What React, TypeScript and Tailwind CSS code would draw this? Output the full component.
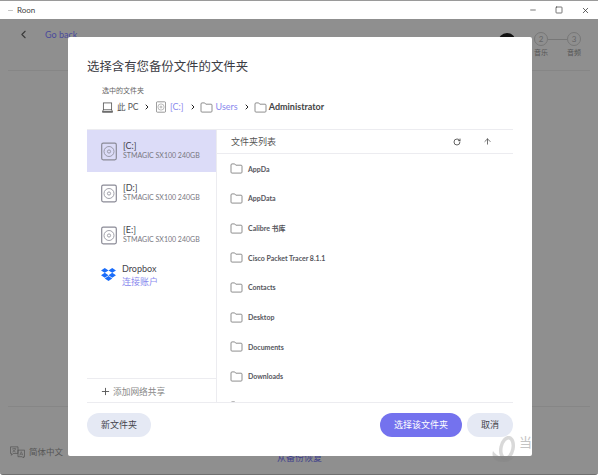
import { ChevronLeft, ChevronRight, Plus, RotateCw, ArrowUp, Minus, Square, X } from "lucide-react";

const FONT = "font-['Lato','Noto_Sans_CJK_SC',sans-serif]";

function Folder({ className = "" }: { className?: string }) {
  return (
    <svg viewBox="0 0 14 12" className={className} fill="none" stroke="currentColor" strokeWidth="0.9">
      <path d="M1 2.2C1 1.5 1.4 1 2 1h3l1.2 1.4H12c.6 0 1 .4 1 1V10c0 .6-.4 1-1 1H2c-.6 0-1-.4-1-1z" />
    </svg>
  );
}

function Drive({ className = "" }: { className?: string }) {
  return (
    <svg viewBox="0 0 16 18" className={className} fill="none" stroke="currentColor">
      <rect x="0.7" y="0.7" width="14.6" height="16.6" rx="1.5" strokeWidth="1.2" />
      <circle cx="8" cy="9" r="5" strokeWidth="0.8" />
      <circle cx="8" cy="9" r="1.6" strokeWidth="0.8" />
    </svg>
  );
}

function DriveRow({ name, selected }: { name: string; selected?: boolean }) {
  return (
    <div className={`h-[42px] flex items-center pl-[14px] gap-[6px] ${selected ? "bg-[#dcdcf8]" : ""}`}>
      <Drive className="w-[16px] h-[19px] text-[#8a8a96]" />
      <div className="flex flex-col mb-[2px]">
        <span className="text-[9px] leading-[10px] text-[#44444c]">{name}</span>
        <span className="text-[7px] leading-[8px] text-[#77777f]">STMAGIC SX100 240GB</span>
      </div>
    </div>
  );
}

const folders = ["AppDa", "AppData", "Calibre 书库", "Cisco Packet Tracer 8.1.1", "Contacts", "Desktop", "Documents", "Downloads", ""];

export default function App() {
  return (
    <div className={`${FONT} relative w-[600px] h-[475px] overflow-hidden bg-white`}>
      {/* window behind the dialog */}
      <div className="w-[598px] h-[475px] flex flex-col bg-[#8f8f8f] rounded-b-[3px] border-t border-b border-t-[#9a9a9a] border-b-[#6f6f6f]">
        <div className="h-[18px] shrink-0 bg-white flex items-center pl-[7px] pr-[8px]">
          <Minus className="w-[7px] h-[7px] text-[#999]" />
          <span className="ml-[3px] text-[8px] text-[#444]">Roon</span>
          <div className="ml-auto flex items-center gap-[18px]">
            <Minus className="w-[8px] h-[8px] text-[#333]" />
            <Square className="w-[8px] h-[8px] text-[#333]" />
            <X className="w-[9px] h-[9px] text-[#333]" />
          </div>
        </div>
        <div className="h-[52px] shrink-0 mx-[8px] border-b border-[#868686] relative flex items-start pt-[9px]">
          <ChevronLeft className="ml-[9px] w-[13px] h-[13px] text-[#3a3a3a]" />
          <span className="ml-[15px] text-[9px] leading-[13px] text-[#4a4a9c]">Go back</span>
          <div className="absolute left-[490px] top-[14px] w-[18px] h-[18px] rounded-full bg-[#111]" />
          <div className="ml-auto mr-[9px] mt-[4px] flex items-start">
            <div className="flex flex-col items-center w-[14px]">
              <span className="w-[14px] h-[14px] rounded-full border border-[#777] flex items-center justify-center text-[8px] text-[#666]">2</span>
              <span className="text-[7px] leading-[9px] whitespace-nowrap text-[#555] mt-[2px]">音乐</span>
            </div>
            <div className="w-[19px] h-px bg-[#777] mt-[7px]" />
            <div className="flex flex-col items-center w-[14px]">
              <span className="w-[14px] h-[14px] rounded-full border border-[#777] flex items-center justify-center text-[8px] text-[#666]">3</span>
              <span className="text-[7px] leading-[9px] whitespace-nowrap text-[#555] mt-[2px]">音频</span>
            </div>
          </div>
        </div>
        <div className="flex-1 mx-[8px] border-b border-[#868686]" />
        <div className="h-[67px] shrink-0 flex items-center pl-[10px] relative">
          <div className="mt-[23px] flex items-center gap-[4px]">
            <svg viewBox="0 0 16 12" className="w-[15px] h-[12px] text-[#555]" fill="none" stroke="currentColor" strokeWidth="0.8">
              <path d="M.5.5h8v7h-5l-2 2v-2h-1z" />
              <path d="M8.5 4h7v7h-1v1.5L13 11H8.5z" />
              <path d="M2.5 2.5h4M4.5 1.8v.8M6 2.5c-.5 2-2 3-3.5 3.5M3 3.5c.5 1 1.5 2 3 2.5" strokeWidth="0.6" />
              <path d="M10.3 9.6l1.7-4 1.7 4M10.9 8.4h2.2" strokeWidth="0.6" />
            </svg>
            <span className="text-[8.5px] text-[#555]">简体中文</span>
          </div>
          <span className="absolute left-[277px] top-[44px] text-[9px] text-[#3e3e8c]">从备份恢复</span>
        </div>
      </div>

      {/* dialog */}
      <div className="absolute left-[68px] top-[37px] w-[464px] h-[419px] bg-white rounded-[2px] flex flex-col px-[19px]">
        <h1 className="mt-[21px] h-[18px] text-[12.4px] leading-[18px] text-[#3c3c44]">选择含有您备份文件的文件夹</h1>
        <div className="mt-[9px] ml-[15px] text-[7px] leading-[10px] text-[#666]">选中的文件夹</div>
        <div className="mt-[5px] ml-[15px] h-[14px] flex items-center text-[9px] text-[#555]">
          <svg viewBox="0 0 12 12" className="w-[11px] h-[11px] text-[#555]" fill="none" stroke="currentColor" strokeWidth="0.9">
            <rect x="1.5" y="1" width="9" height="7.5" />
            <path d="M.3 11h11.4" strokeWidth="1.2" />
            <path d="M1.5 8.5 .5 10.5h11l-1-2" />
          </svg>
          <span className="ml-[4px] w-[22px] whitespace-nowrap text-[8.5px]">此 PC</span>
          <ChevronRight className="ml-[4px] w-[8px] h-[8px] text-[#222]" strokeWidth={3} />
          <Drive className="ml-[5px] w-[10px] h-[12px] text-[#777]" />
          <span className="ml-[4px] text-[#8a8aee]">[C:]</span>
          <ChevronRight className="ml-[5px] w-[8px] h-[8px] text-[#222]" strokeWidth={3} />
          <Folder className="ml-[3px] w-[13px] h-[11px] text-[#777]" />
          <span className="ml-[3px] text-[#8a8aee]">Users</span>
          <ChevronRight className="ml-[5px] w-[8px] h-[8px] text-[#222]" strokeWidth={3} />
          <Folder className="ml-[3px] w-[13px] h-[11px] text-[#777]" />
          <span className="ml-[2px] font-bold text-[#444]">Administrator</span>
        </div>

        <div className="mt-[15px] flex-1 min-h-0 flex border-y border-[#ececf0]">
          <div className="w-[130px] shrink-0 border-r border-[#ececf0] flex flex-col">
            <DriveRow name="[C:]" selected />
            <DriveRow name="[D:]" />
            <DriveRow name="[E:]" />
            <div className="h-[38px] flex items-center pl-[14px] gap-[6px]">
              <svg viewBox="0 0 16 15" className="w-[15px] h-[14px] text-[#1a6dfa]" fill="currentColor">
                <path d="M4 0 8 2.6 4 5.2 0 2.6zM12 0l4 2.6-4 2.6-4-2.6zM0 7.8l4-2.6 4 2.6-4 2.6zM12 5.2l4 2.6-4 2.6-4-2.6zM4 11.3l4-2.6 4 2.6-4 2.6z" />
              </svg>
              <div className="flex flex-col">
                <span className="text-[9px] leading-[12px] text-[#44444c]">Dropbox</span>
                <span className="text-[9px] leading-[13px] text-[#8a8aee]">连接账户</span>
              </div>
            </div>
            <div className="mt-auto h-[24px] border-t border-[#ececf0] flex items-center pl-[13px] pt-[2px] text-[8.7px] text-[#888]">
              <Plus className="w-[11px] h-[11px] text-[#555]" />
              <span className="ml-[2px]">添加网络共享</span>
            </div>
          </div>
          <div className="flex-1 min-w-0 flex flex-col">
            <div className="h-[24px] shrink-0 border-b border-[#ececf0] flex items-center pl-[14px] text-[9px] text-[#555]">
              <span>文件夹列表</span>
              <RotateCw className="ml-auto w-[8px] h-[8px] text-[#444]" strokeWidth={2.5} />
              <ArrowUp className="ml-[22px] mr-[21px] w-[9px] h-[9px] text-[#444]" strokeWidth={2} />
            </div>
            <div className="flex-1 min-h-0 overflow-hidden">
              {folders.map((f, i) => (
                <div key={i} className="h-[29.7px] flex items-center pl-[13px] gap-[5px]">
                  <Folder className="w-[13px] h-[11px] text-[#777]" />
                  <span className="text-[7px] font-bold text-[#55555c]">{f}</span>
                </div>
              ))}
            </div>
          </div>
        </div>

        <div className="h-[53px] shrink-0 flex items-start pt-[10px] text-[9px]">
          <button className="w-[64px] h-[24px] rounded-full bg-[#e5e9f4] text-[#44444c]">新文件夹</button>
          <button className="ml-auto w-[82px] h-[24px] rounded-full bg-[#7472ee] text-white">选择该文件夹</button>
          <button className="ml-[5px] w-[46px] h-[24px] rounded-full bg-[#e5e9f4] text-[#44444c]">取消</button>
        </div>
      </div>

      {/* watermark */}
      <div className="absolute left-[490px] top-[436px] flex items-start">
        <svg viewBox="0 0 26 27" className="w-[26px] h-[27px]" fill="none">
          <ellipse cx="17" cy="12" rx="6" ry="10.5" transform="rotate(12 17 12)" stroke="#808080" strokeOpacity="0.3" strokeWidth="3.5" />
          <path d="M3 15C1 21 5 26 13 26c5 0 9-2 11-5-4 2-9 2-13 0-3-1-6-3-8-6z" fill="#808080" fillOpacity="0.3" />
        </svg>
        <span className="ml-[3px] mt-[-1px] text-[13px] leading-[15px] text-[#c4c4c4]">当</span>
      </div>
    </div>
  );
}
